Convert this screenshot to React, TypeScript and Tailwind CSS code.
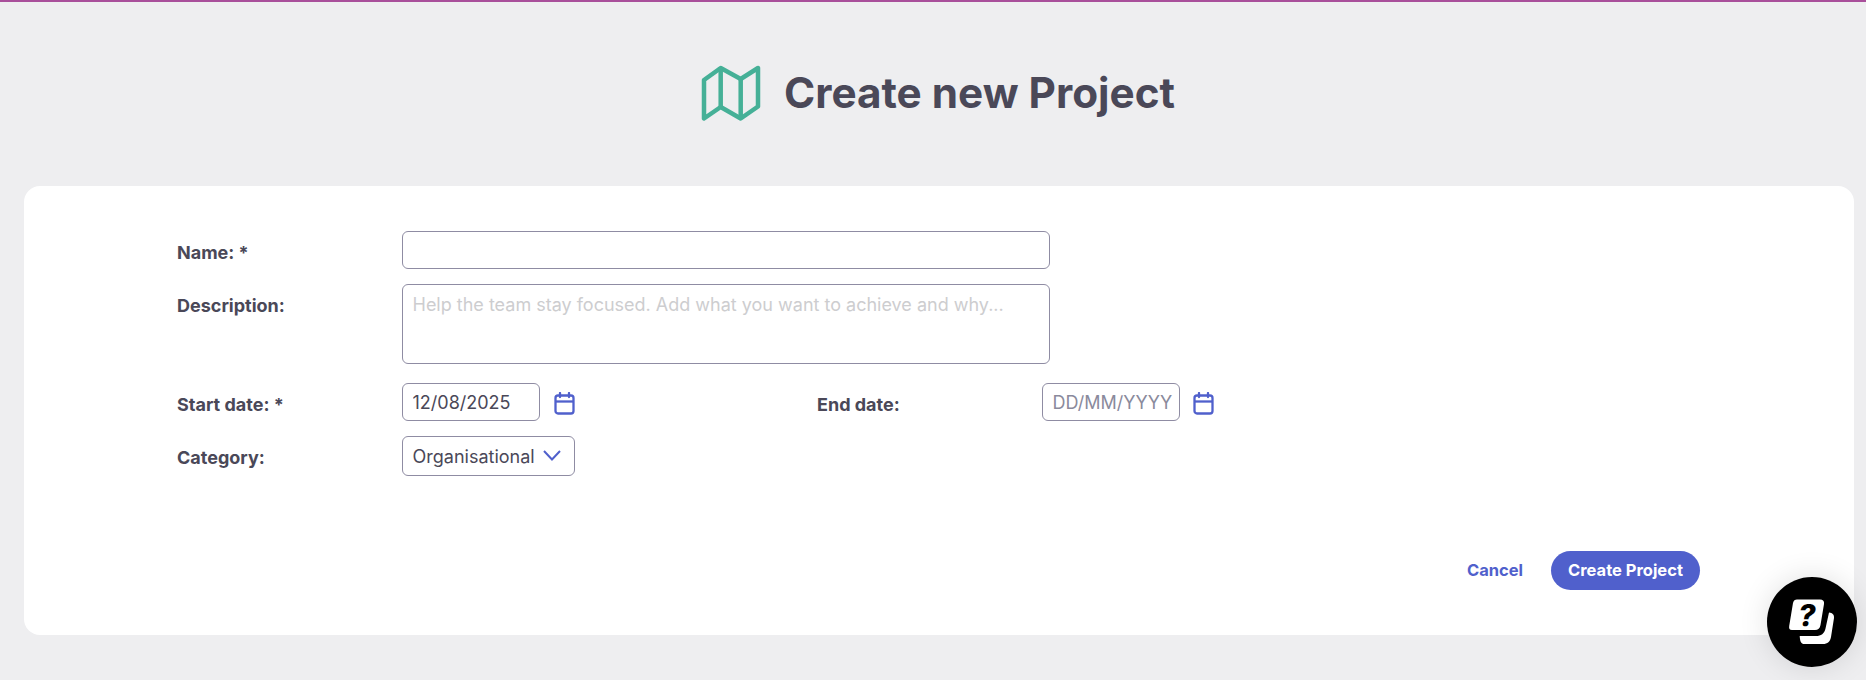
const inputBase =
  "h-[38px] rounded-md border border-[#8f8ca3] bg-white px-[9.5px] text-[18px] text-[#4a4858] outline-none font-['Inter',sans-serif]";

function CalendarIcon() {
  return (
    <svg width="21" height="23" viewBox="0 0 21 23" fill="none" stroke="#5060cc" strokeWidth="2.3" className="mt-[2px] block shrink-0">
      <rect x="1.5" y="3.5" width="18" height="18" rx="2.5" />
      <path d="M1.5 9.5H19.5" />
      <path d="M6 1V5M15 1V5" strokeLinecap="round" />
    </svg>
  );
}

function MapIcon() {
  return (
    <svg width="64" height="60" viewBox="0 0 64 60" fill="none" stroke="#45b097" strokeWidth="4.5" strokeLinejoin="round" className="shrink-0">
      <path d="M5 17L21.700 5L41.700 16L59 5V43.500L41.700 55.500L21.700 44L5 55.500Z" />
      <path d="M21.700 5V44M41.700 16V55.500" />
    </svg>
  );
}

function HelpIcon() {
  return (
    <svg width="46" height="46" viewBox="0 0 46 46" fill="none" overflow="visible">
      <path d="M40 13.500C43.500 14 45.300 15.500 45 19L42 38C41.300 42.500 38.500 45 34 45H15C12.500 45 11 43 10.700 37H27C32 37 35.500 34.500 36.500 29.500Z" fill="white" />
      <path d="M8 0.500H31C34 0.500 35.500 2 35 5L31.500 26C31 29.500 29 31 26 31H3C0.500 31 -0.200 29.500 0.200 27L4 4C4.500 1.500 6 0.500 8 0.500Z" fill="white" />
      <g transform="translate(17 27) skewX(-8)">
        <text x="0" y="0" textAnchor="middle" fill="black" fontSize="30" fontWeight="800" fontFamily="Inter, sans-serif">?</text>
      </g>
    </svg>
  );
}

function Row({ label, children, className = "", labelClass = "pt-[5px]" }: { label: string; children: React.ReactNode; className?: string; labelClass?: string }) {
  return (
    <div className={`flex items-center ${className}`}>
      <label className={`w-[225px] shrink-0 text-[18px] font-bold text-[#4a4858] ${labelClass}`}>{label}</label>
      {children}
    </div>
  );
}

export default function App() {
  return (
    <div className="relative h-[680px] overflow-hidden border-t-2 border-[#a94f9b] bg-[#eeeef0] font-['Inter',sans-serif]">
      <header className="flex h-[184px] items-start justify-center pl-[8px] pt-[60px]">
        <div className="flex items-center gap-[21px]">
          <MapIcon />
          <h1 className="mt-[1px] text-[42.25px] font-bold leading-[60px] text-[#4a4858]">Create new Project</h1>
        </div>
      </header>

      <main className="ml-6 mr-3 h-[449px] rounded-2xl bg-white pl-[153px] pr-[154px] pt-[45px]">
        <Row label="Name: *">
          <input className={`${inputBase} w-[648px]`} />
        </Row>
        <Row label="Description:" className="mt-[15px] !items-start" labelClass="pt-[8px]">
          <textarea
            className={`${inputBase} h-[80px] w-[648px] resize-none py-[6px] placeholder:text-[#cdcdcf]`}
            placeholder="Help the team stay focused. Add what you want to achieve and why..."
          />
        </Row>
        <div className="mt-[19px] flex">
          <Row label="Start date: *" className="w-[640px]">
            <input className={`${inputBase} w-[138px]`} defaultValue="12/08/2025" />
            <span className="ml-[14px]"><CalendarIcon /></span>
          </Row>
          <Row label="End date:">
            <input className={`${inputBase} w-[138px] !pr-1 text-[17.7px] placeholder:text-[#8a8a9c]`} placeholder="DD/MM/YYYY" />
            <span className="ml-[13px]"><CalendarIcon /></span>
          </Row>
        </div>
        <Row label="Category:" className="mt-[15px]" labelClass="pt-[3px]">
          <div className={`${inputBase} flex h-[40px] w-[173px] items-center justify-between pr-[13px]`}>
            <span>Organisational</span>
            <svg width="18" height="11" viewBox="0 0 18 11" fill="none" stroke="#5060cc" strokeWidth="2" className="mb-[2px] shrink-0">
              <path d="M1 1L9 9.500L17 1" />
            </svg>
          </div>
        </Row>
        <div className="mt-[75px] flex items-center justify-end gap-[28px]">
          <button className="text-[16.5px] font-bold text-[#5060cc]">Cancel</button>
          <button className="h-[39px] w-[149px] rounded-full bg-[#5060cc] text-[16.5px] font-bold text-white">Create Project</button>
        </div>
      </main>

      <div className="absolute left-[1767px] top-[575px] flex h-[90px] w-[90px] items-center justify-center rounded-full bg-black shadow-[0_0_30px_rgba(0,0,0,0.12)]">
        <HelpIcon />
      </div>
    </div>
  );
}
